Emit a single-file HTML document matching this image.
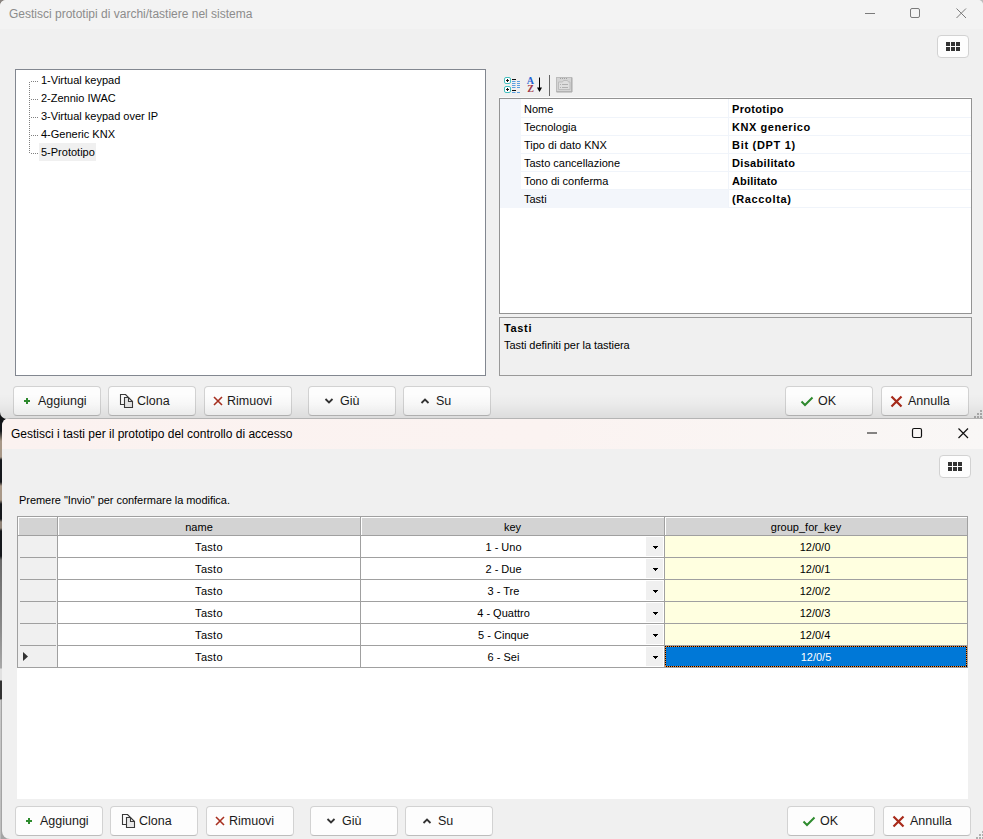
<!DOCTYPE html>
<html><head><meta charset="utf-8">
<style>
*{box-sizing:border-box;margin:0;padding:0}
html,body{width:983px;height:839px;overflow:hidden;background:#f0f0f0;font-family:"Liberation Sans",sans-serif;color:#000}
.abs{position:absolute}
.t11{font-size:11px;line-height:14px;white-space:nowrap}
.t12{font-size:12px;line-height:16px;white-space:nowrap}
.t13{font-size:13px;line-height:16px;white-space:nowrap}
.btn{position:absolute;height:30px;width:88px;margin-top:-1px;background:#fdfdfd;border:1px solid #d2d2d2;border-bottom-color:#bdbdbd;border-radius:4px}
.btn span{position:absolute;top:6px;font-size:12.5px;line-height:16px;white-space:nowrap;color:#1a1a1a}
.btn svg{position:absolute}
#w1{position:absolute;left:0;top:0;width:983px;height:419px;background:#f0f0f0;border-radius:6px 5px 0 7px;overflow:hidden}
#w1 .title{position:absolute;left:0;top:0;width:983px;height:29px;background:#f3f3f3}
#w2{position:absolute;left:2px;top:418px;width:981px;height:421px;background:#f0f0f0;border-radius:8px 0 0 8px;overflow:hidden}
#w2 .title{position:absolute;left:0;top:0;width:981px;height:31px;border-top:1px solid #b4b4b4;background:linear-gradient(90deg,#fbf2f0 0,#fbf3f1 55%,#f9f7f6 100%)}
.tree{position:absolute;left:15px;top:69px;width:471px;height:307px;background:#fff;border:1px solid #828790}
.ti{position:absolute;left:25px;margin-top:-1px;font-size:11px;line-height:14px;white-space:nowrap}
.pg{position:absolute;left:499px;top:98px;width:473px;height:216px;background:#fff;border:1px solid #939393}
.pr{position:absolute;left:1px;width:469px;height:18px}
.pr .l{position:absolute;left:23px;top:2px;font-size:11px;line-height:14px;white-space:nowrap}
.pr .v{position:absolute;left:231px;top:2px;font-size:11px;line-height:14px;font-weight:bold;white-space:nowrap}
.desc{position:absolute;left:499px;top:317px;width:473px;height:59px;background:#f0f0f0;border:1px solid #999}
.dg{position:absolute;left:15px;top:98px;width:951px;height:283px;background:#fff}
.hd{position:absolute;top:1px;height:19px;background:#d3d3d3;border-right:1px solid #a0a0a0;border-bottom:1px solid #a0a0a0;box-shadow:inset 1px 1px 0 #fff;font-size:11px;line-height:21px;text-align:center}
.c{position:absolute;height:22px;border-right:1px solid #a0a0a0;border-bottom:1px solid #a0a0a0;font-size:11px;line-height:23px;text-align:center;background:#fff}
.rh{position:absolute;left:0;width:41px;height:22px;background:#f0f0f0;border-right:1px solid #a0a0a0;border-left:1px solid #a0a0a0}
.rh i{position:absolute;left:2px;right:1px;bottom:0;height:1px;background:#a0a0a0}
.y{background:#ffffe0}
.dd{position:absolute;right:1px;top:1px;width:17px;height:19px;background:#f0f0f0}
.dd:after{content:"";position:absolute;left:7px;top:9px;width:5px;height:3px;background:linear-gradient(#000,#000) 0 0/5px 1px no-repeat,linear-gradient(#000,#000) 1px 1px/3px 1px no-repeat,linear-gradient(#000,#000) 2px 2px/1px 1px no-repeat}
</style></head><body>
<div class="abs" style="left:0;top:400px;width:14px;height:439px;background:linear-gradient(180deg,#111 0,#14171b 31px,#a89888 41px,#a89888 57px,#15181c 60px,#15181c 82px,#a89888 86px,#a89888 100px,#15181c 104px,#15181c 119px,#908478 122px,#908478 128px,#15181c 131px,#15181c 156px,#6a6a6a 160px,#8c8c8c 230px,#a8a8a8 268px,#e0e0e0 269px,#e0e0e0 280px,#333 281px,#333 299px,#c8c8c8 300px,#bcbcbc 439px)"></div><div class="abs" style="left:1px;top:700px;width:12px;height:139px;background:#a4a4a4"></div>
<div class="abs" style="left:0;top:0;width:8px;height:8px;background:#8a8480"></div><div class="abs" style="left:975px;top:0;width:8px;height:8px;background:#bdbdbd"></div>
<div id="w1">
 <div class="title"></div>
 <div class="abs t12" style="left:9px;top:6px;color:#8c8c8c">Gestisci prototipi di varchi/tastiere nel sistema</div>
 <svg class="abs" style="left:860px;top:4px" width="112" height="20" viewBox="0 0 112 20" fill="none" stroke="#7a7a7a" stroke-width="1">
  <path d="M5 9.5h10"/><rect x="50.5" y="4.5" width="9" height="9" rx="1.5"/><path d="M96.500 4.500l9.500 9.500M106 4.500l-9.500 9.500"/>
 </svg>
 <div class="abs" style="left:937px;top:35px;width:32px;height:23px;background:#fdfdfd;border:1px solid #d2d2d2;border-radius:4px">
  <svg class="abs" style="left:8px;top:6px" width="15" height="10" viewBox="0 0 15 10" fill="#333"><rect x="0" y="0" width="4" height="4"/><rect x="5" y="0" width="4" height="4"/><rect x="10" y="0" width="4" height="4"/><rect x="0" y="5" width="4" height="4"/><rect x="5" y="5" width="4" height="4"/><rect x="10" y="5" width="4" height="4"/></svg>
 </div>

 <div class="tree">
  <svg class="abs" style="left:13px;top:11px" width="12" height="76" viewBox="0 0 12 76" stroke="#808080" stroke-width="1" stroke-dasharray="1 1" fill="none"><path d="M0.500 1v72"/><path d="M2 0.500h8M2 18.500h8M2 36.500h8M2 54.500h8M2 72.500h8"/></svg>
  <div class="ti" style="top:4px">1-Virtual keypad</div>
  <div class="ti" style="top:22px">2-Zennio IWAC</div>
  <div class="ti" style="top:40px">3-Virtual keypad over IP</div>
  <div class="ti" style="top:58px">4-Generic KNX</div>
  <div class="abs" style="left:23px;top:73px;width:57px;height:18px;background:#f0f0f0"></div>
  <div class="ti" style="top:76px">5-Prototipo</div>
 </div>

 <!-- property grid toolbar -->
 <svg class="abs" style="left:498px;top:70px" width="80" height="28" viewBox="0 0 80 28">
  <g fill="#fff" stroke="#45c0c0" stroke-width="1"><rect x="6.500" y="7.500" width="6" height="6" rx="1.500"/><rect x="6.500" y="16.500" width="6" height="6" rx="1.500"/></g>
  <g stroke="#111" stroke-width="1"><path d="M8 10.500h3M9.500 9v3M8 19.500h3M9.500 18v3"/><path d="M14 9.500h4M14 20.500h4"/></g>
  <g stroke="#5aa0e0" stroke-width="1"><path d="M14 11.500h3.500M19 11.500h3M14 13.500h3.500M19 13.500h3M14 15.500h3.500M19 15.500h3M14 17.500h3.500M19 17.500h3M14 22.500h3.500M19 22.500h3"/></g>
  <text x="28.800" y="14" font-family="Liberation Serif,serif" font-size="10" font-weight="bold" fill="#1f62d0">A</text>
  <text x="29.300" y="22.300" font-family="Liberation Serif,serif" font-size="10" font-weight="bold" fill="#a03848">Z</text>
  <path d="M41.500 7.500v12" stroke="#000" stroke-width="1" fill="none"/><path d="M39 17.500h5l-2.500 4.500z" fill="#000"/>
  <path d="M51.500 5v21" stroke="#666" stroke-width="1"/>
  <g stroke-width="1"><rect x="58.500" y="7.500" width="15" height="14" fill="#d4d4d4" stroke="#bcbcbc"/><path d="M58.500 22h15.500v-14.500" fill="none" stroke="#a8a8a8"/><path d="M62 8.500h8" stroke="#a0a0a0" stroke-dasharray="1 1"/><path d="M60.500 19.500v-7.500h4l1 -1.500h4l1 1.500h1.500v7.500z" fill="#dedede" stroke="#bdbdbd"/><path d="M62 14.500h1M64 14.500h6M62 17.500h1M64 17.500h6" stroke="#b0b0b0"/></g>
 </svg>

 <div class="abs" style="left:499px;top:97px;width:473px;height:1px;background:#fafafa"></div>
 <div class="pg">
  <div class="abs" style="left:0;top:0;width:21px;height:109px;background:#f3f6fb"></div>
  <div class="pr" style="top:1px"><span class="l">Nome</span><span class="v" style="letter-spacing:0.32px">Prototipo</span></div>
  <div class="pr" style="top:19px"><span class="l">Tecnologia</span><span class="v" style="letter-spacing:0.55px">KNX generico</span></div>
  <div class="pr" style="top:37px"><span class="l">Tipo di dato KNX</span><span class="v" style="letter-spacing:0.7px">Bit (DPT 1)</span></div>
  <div class="pr" style="top:55px"><span class="l">Tasto cancellazione</span><span class="v" style="letter-spacing:0.33px">Disabilitato</span></div>
  <div class="pr" style="top:73px"><span class="l">Tono di conferma</span><span class="v" style="letter-spacing:0.16px">Abilitato</span></div>
  <div class="pr" style="top:91px"><div class="abs" style="left:19px;top:0;width:208px;height:18px;background:#f3f6fb"></div><span class="l">Tasti</span><span class="v" style="letter-spacing:0.63px">(Raccolta)</span></div>
  <svg class="abs" style="left:0;top:0" width="471" height="110" stroke="#f0f4fa" stroke-width="1"><path d="M21 18.500h450M21 36.500h450M21 54.500h450M21 72.500h450M21 90.500h450M228 108.500h243M228.500 0v108"/></svg>
 </div>
 <div class="desc">
  <div class="abs t11" style="left:4px;top:3px;font-weight:bold;letter-spacing:0.65px">Tasti</div>
  <div class="abs t11" style="left:4px;top:20px;letter-spacing:-0.05px">Tasti definiti per la tastiera</div>
 </div>

 <div class="btn" style="left:13px;top:387px"><svg style="left:9px;top:10px" width="8" height="8" viewBox="0 0 8 8"><path d="M4 1v6M1 4h6" stroke="#2e8b2e" stroke-width="2"/></svg><span style="left:24px">Aggiungi</span></div>
 <div class="btn" style="left:108px;top:387px"><svg style="left:10px;top:7px" width="15" height="15" viewBox="0 0 15 15" fill="none" stroke="#3a3a3a" stroke-width="1.100" stroke-linejoin="miter"><path d="M5.500 10.500H1.500V0.500H6.500L13.500 7.500" fill="#fbfbfb"/><path d="M5.500 3.500H9.500V7.500H13.500V13.500H5.500Z" fill="#e9e9e9"/></svg><span style="left:28px">Clona</span></div>
 <div class="btn" style="left:204px;top:387px"><svg style="left:8px;top:9px" width="10" height="10" viewBox="0 0 10 10"><path d="M1 1l8 8M9 1l-8 8" stroke="#a83020" stroke-width="1.600"/></svg><span style="left:22px">Rimuovi</span></div>
 <div class="btn" style="left:308px;top:387px"><svg style="left:15px;top:10px" width="10" height="8" viewBox="0 0 10 8"><path d="M1.500 2l3.500 3.500l3.500 -3.500" stroke="#333" stroke-width="1.800" fill="none"/></svg><span style="left:31px">Giù</span></div>
 <div class="btn" style="left:403px;top:387px"><svg style="left:16px;top:10px" width="10" height="8" viewBox="0 0 10 8"><path d="M1.500 6l3.500 -3.500l3.500 3.500" stroke="#333" stroke-width="1.800" fill="none"/></svg><span style="left:32px">Su</span></div>
 <div class="btn" style="left:785px;top:387px"><svg style="left:14px;top:9px" width="14" height="11" viewBox="0 0 14 11"><path d="M1.500 5.500l3.500 3.500l7.500 -7.500" stroke="#2e8b2e" stroke-width="2" fill="none"/></svg><span style="left:32px">OK</span></div>
 <div class="btn" style="left:881px;top:387px"><svg style="left:8px;top:8px" width="13" height="13" viewBox="0 0 13 13"><path d="M1.500 1.500l10 10M11.500 1.500l-10 10" stroke="#a82a1a" stroke-width="2.200"/></svg><span style="left:26px">Annulla</span></div>
 <svg class="abs" style="left:972px;top:408px" width="11" height="11" viewBox="0 0 11 11" fill="#b0b0b0"><rect x="8" y="2" width="2" height="2"/><rect x="5" y="5" width="2" height="2"/><rect x="8" y="5" width="2" height="2"/><rect x="2" y="8" width="2" height="2"/><rect x="5" y="8" width="2" height="2"/><rect x="8" y="8" width="2" height="2"/></svg>
</div>

<div class="abs" style="left:0;top:394px;width:983px;height:25px;background:linear-gradient(180deg,rgba(0,0,0,0) 0,rgba(0,0,0,0.025) 40%,rgba(0,0,0,0.085) 100%);pointer-events:none"></div>
<div id="w2">
 <div class="title"></div>
 <div class="abs t12" style="left:9px;top:8px;color:#000">Gestisci i tasti per il prototipo del controllo di accesso</div>
 <svg class="abs" style="left:860px;top:5px" width="112" height="20" viewBox="0 0 112 20" fill="none" stroke="#111" stroke-width="1.200">
  <path d="M5 10h10"/><rect x="50.500" y="5.500" width="9" height="9" rx="1.500"/><path d="M96.500 5.500l9.500 9.500M106 5.500l-9.500 9.500"/>
 </svg>
 <div class="abs" style="left:937px;top:37px;width:32px;height:23px;background:#fdfdfd;border:1px solid #d2d2d2;border-radius:4px">
  <svg class="abs" style="left:8px;top:6px" width="15" height="10" viewBox="0 0 15 10" fill="#333"><rect x="0" y="0" width="4" height="4"/><rect x="5" y="0" width="4" height="4"/><rect x="10" y="0" width="4" height="4"/><rect x="0" y="5" width="4" height="4"/><rect x="5" y="5" width="4" height="4"/><rect x="10" y="5" width="4" height="4"/></svg>
 </div>
 <div class="abs t11" style="left:17px;top:75px;letter-spacing:-0.04px">Premere "Invio" per confermare la modifica.</div>

 <div class="dg">
  <div class="abs" style="left:0;top:0;width:951px;height:1px;background:#a0a0a0"></div>
  <div class="hd" style="left:0;width:41px;border-left:1px solid #a0a0a0"></div>
  <div class="hd" style="left:41px;width:303px;padding-right:20px">name</div>
  <div class="hd" style="left:344px;width:304px">key</div>
  <div class="hd" style="left:648px;width:303px;padding-right:20px">group_for_key</div>
  <div class="rh" style="top:20px"><i></i></div>
  <div class="c" style="top:20px;left:41px;width:303px;letter-spacing:0.3px">Tasto</div>
  <div class="c" style="top:20px;left:344px;width:304px;padding-right:18px">1 - Uno<div class="dd"></div></div>
  <div class="c y" style="padding-right:2px;top:20px;left:648px;width:303px">12/0/0</div>
  <div class="rh" style="top:42px"><i></i></div>
  <div class="c" style="top:42px;left:41px;width:303px;letter-spacing:0.3px">Tasto</div>
  <div class="c" style="top:42px;left:344px;width:304px;padding-right:18px">2 - Due<div class="dd"></div></div>
  <div class="c y" style="padding-right:2px;top:42px;left:648px;width:303px">12/0/1</div>
  <div class="rh" style="top:64px"><i></i></div>
  <div class="c" style="top:64px;left:41px;width:303px;letter-spacing:0.3px">Tasto</div>
  <div class="c" style="top:64px;left:344px;width:304px;padding-right:18px">3 - Tre<div class="dd"></div></div>
  <div class="c y" style="padding-right:2px;top:64px;left:648px;width:303px">12/0/2</div>
  <div class="rh" style="top:86px"><i></i></div>
  <div class="c" style="top:86px;left:41px;width:303px;letter-spacing:0.3px">Tasto</div>
  <div class="c" style="top:86px;left:344px;width:304px;padding-right:18px">4 - Quattro<div class="dd"></div></div>
  <div class="c y" style="padding-right:2px;top:86px;left:648px;width:303px">12/0/3</div>
  <div class="rh" style="top:108px"><i></i></div>
  <div class="c" style="top:108px;left:41px;width:303px;letter-spacing:0.3px">Tasto</div>
  <div class="c" style="top:108px;left:344px;width:304px;padding-right:18px">5 - Cinque<div class="dd"></div></div>
  <div class="c y" style="padding-right:2px;top:108px;left:648px;width:303px">12/0/4</div>
  <div class="rh" style="top:130px"><svg class="abs" style="left:5px;top:6px" width="6" height="10" viewBox="0 0 6 10"><path d="M0 0l5 4.500l-5 4.500z" fill="#333"/></svg><i style="left:0;right:0"></i></div>
  <div class="c" style="top:130px;left:41px;width:303px;letter-spacing:0.3px">Tasto</div>
  <div class="c" style="top:130px;left:344px;width:304px;padding-right:18px">6 - Sei<div class="dd"></div></div>
  <div class="c" style="top:130px;left:648px;width:303px;background:#0078d7;color:#fff">12/0/5<div class="abs" style="left:0;top:0;width:302px;height:21px;background:repeating-linear-gradient(90deg,#000 0 1px,#ff8728 1px 2px) top left/100% 1px no-repeat,repeating-linear-gradient(90deg,#ff8728 0 1px,#000 1px 2px) bottom left/100% 1px no-repeat,repeating-linear-gradient(180deg,#000 0 1px,#ff8728 1px 2px) top left/1px 100% no-repeat,repeating-linear-gradient(180deg,#ff8728 0 1px,#000 1px 2px) top right/1px 100% no-repeat"></div></div>
 </div>

 <div class="btn" style="left:13px;top:389px"><svg style="left:9px;top:10px" width="8" height="8" viewBox="0 0 8 8"><path d="M4 1v6M1 4h6" stroke="#2e8b2e" stroke-width="2"/></svg><span style="left:24px">Aggiungi</span></div>
 <div class="btn" style="left:108px;top:389px"><svg style="left:10px;top:7px" width="15" height="15" viewBox="0 0 15 15" fill="none" stroke="#3a3a3a" stroke-width="1.100" stroke-linejoin="miter"><path d="M5.500 10.500H1.500V0.500H6.500L13.500 7.500" fill="#fbfbfb"/><path d="M5.500 3.500H9.500V7.500H13.500V13.500H5.500Z" fill="#e9e9e9"/></svg><span style="left:28px">Clona</span></div>
 <div class="btn" style="left:204px;top:389px"><svg style="left:8px;top:9px" width="10" height="10" viewBox="0 0 10 10"><path d="M1 1l8 8M9 1l-8 8" stroke="#a83020" stroke-width="1.600"/></svg><span style="left:22px">Rimuovi</span></div>
 <div class="btn" style="left:308px;top:389px"><svg style="left:15px;top:10px" width="10" height="8" viewBox="0 0 10 8"><path d="M1.500 2l3.500 3.500l3.500 -3.500" stroke="#333" stroke-width="1.800" fill="none"/></svg><span style="left:31px">Giù</span></div>
 <div class="btn" style="left:403px;top:389px"><svg style="left:16px;top:10px" width="10" height="8" viewBox="0 0 10 8"><path d="M1.500 6l3.500 -3.500l3.500 3.500" stroke="#333" stroke-width="1.800" fill="none"/></svg><span style="left:32px">Su</span></div>
 <div class="btn" style="left:785px;top:389px"><svg style="left:14px;top:9px" width="14" height="11" viewBox="0 0 14 11"><path d="M1.500 5.500l3.500 3.500l7.500 -7.500" stroke="#2e8b2e" stroke-width="2" fill="none"/></svg><span style="left:32px">OK</span></div>
 <div class="btn" style="left:881px;top:389px"><svg style="left:8px;top:8px" width="13" height="13" viewBox="0 0 13 13"><path d="M1.500 1.500l10 10M11.500 1.500l-10 10" stroke="#a82a1a" stroke-width="2.200"/></svg><span style="left:26px">Annulla</span></div>
 <svg class="abs" style="left:972px;top:411px" width="11" height="11" viewBox="0 0 11 11" fill="#b0b0b0"><rect x="8" y="2" width="2" height="2"/><rect x="5" y="5" width="2" height="2"/><rect x="8" y="5" width="2" height="2"/><rect x="2" y="8" width="2" height="2"/><rect x="5" y="8" width="2" height="2"/><rect x="8" y="8" width="2" height="2"/></svg>
</div>
</body></html>
